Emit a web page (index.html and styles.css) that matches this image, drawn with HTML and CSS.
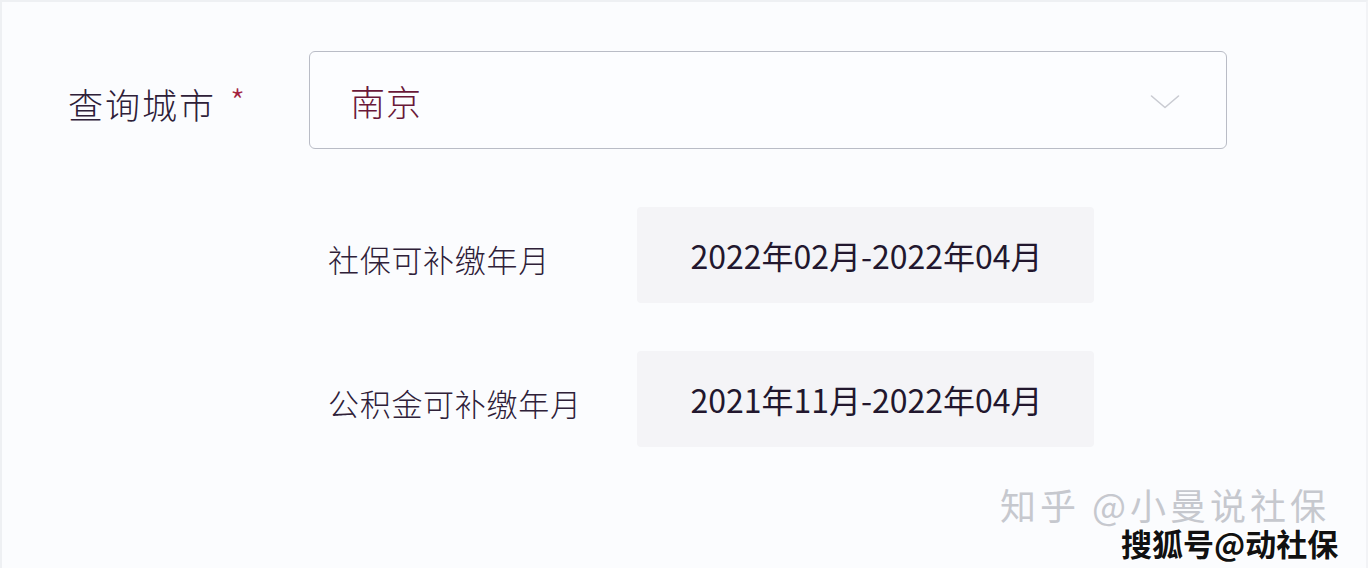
FILE: index.html
```html
<!DOCTYPE html>
<html lang="zh-CN">
<head>
<meta charset="utf-8">
<title>查询城市</title>
<link rel="stylesheet" href="styles.css">
</head>
<body>
<div class="page">
  <div class="row-city">
    <div class="city-label">查询城市<span class="req">*</span></div>
    <div class="select">
      <span class="select-value">南京</span>
      <svg class="chevron" width="30" height="16" viewBox="0 0 30 16"><polyline points="1.5,2 15,13.5 28.5,2" fill="none" stroke="#c9cbd2" stroke-width="1.6" stroke-linecap="round" stroke-linejoin="round"/></svg>
    </div>
  </div>
  <div class="info-list">
    <div class="info-row">
      <div class="info-label">社保可补缴年月</div>
      <div class="info-box">2022年02月-2022年04月</div>
    </div>
    <div class="info-row">
      <div class="info-label">公积金可补缴年月</div>
      <div class="info-box">2021年11月-2022年04月</div>
    </div>
  </div>
  <div class="wm wm-zhihu">知乎 @小曼说社保</div>
  <div class="wm wm-sohu">搜狐号@动社保</div>
</div>
</body>
</html>
```

FILE: styles.css
```css
html, body {
  margin: 0;
  padding: 0;
}
body {
  background: #fbfcfe;
  font-family: "Noto Sans CJK SC", "Noto Sans", sans-serif;
  font-weight: 300;
  color: #2b1d38;
}
.page {
  position: relative;
  width: 1368px;
  height: 568px;
  box-sizing: border-box;
  border-top: 2px solid #eef0f3;
  border-left: 2px solid #eef0f3;
  border-right: 2px solid #f2f3f6;
  padding-top: 49px;
  overflow: hidden;
}
.row-city {
  display: flex;
  align-items: center;
  padding-left: 66px;
}
.city-label {
  width: 241px;
  font-size: 35px;
  line-height: 40px;
  color: #2e2038;
  letter-spacing: 2px;
  padding-top: 8px;
}
.req {
  color: #a3233f;
  font-size: 34px;
  margin-left: 14px;
  position: relative;
  top: -4px;
}
.select {
  width: 918px;
  height: 98px;
  box-sizing: border-box;
  border: 1.5px solid #b9bcc6;
  border-radius: 6px;
  background: #fcfdff;
  display: flex;
  align-items: center;
  justify-content: space-between;
  padding: 0 46px 0 40px;
}
.select-value {
  font-size: 35px;
  color: #6a1838;
  letter-spacing: 1px;
}
.chevron {
  margin-top: 4px;
}
.info-list {
  display: flex;
  flex-direction: column;
  gap: 48px;
  margin-top: 58px;
  padding-left: 326px;
}
.info-row {
  display: flex;
  align-items: center;
}
.info-label {
  width: 309px;
  font-size: 31px;
  letter-spacing: 0.7px;
  color: #2e2038;
  padding-top: 6px;
}
.info-box {
  width: 457px;
  height: 96px;
  background: #f4f4f7;
  border-radius: 4px;
  display: flex;
  align-items: center;
  justify-content: center;
  font-size: 32px;
  font-weight: 400;
  color: #22172e;
  padding-left: 2px;
  box-sizing: border-box;
}
.wm {
  position: absolute;
  white-space: nowrap;
}
.wm-zhihu {
  left: 998px;
  top: 486px;
  font-size: 36px;
  line-height: 32px;
  font-weight: 400;
  color: #c6c8ce;
  letter-spacing: 4px;
}
.wm-sohu {
  left: 1119px;
  top: 526px;
  font-size: 31px;
  line-height: 30px;
  font-weight: 700;
  color: #111;
  letter-spacing: 0;
  text-shadow: 1px 1px 0 #fff, -1px -1px 0 #fff, 1px -1px 0 #fff, -1px 1px 0 #fff;
}
```
